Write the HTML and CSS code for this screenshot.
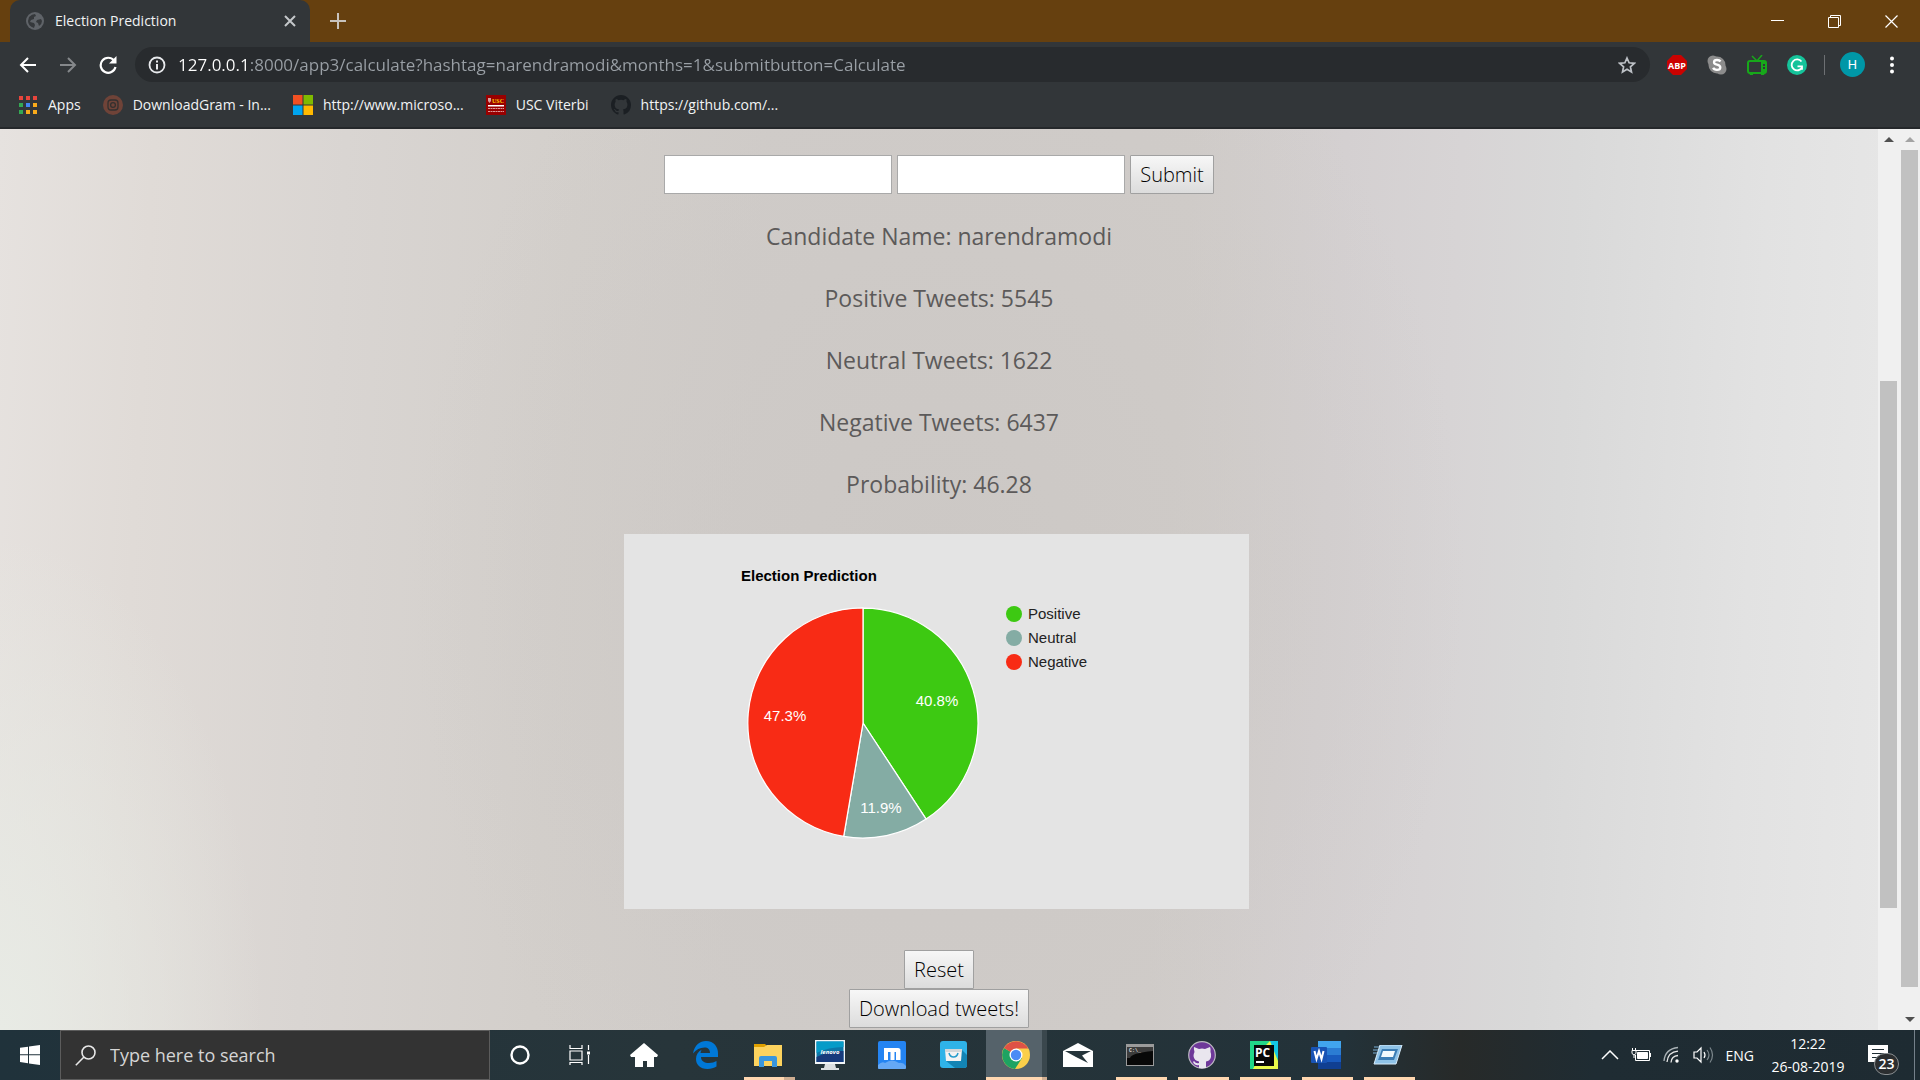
FILE: index.html
```html
<!DOCTYPE html>
<html lang="en">
<head>
<meta charset="utf-8">
<title>Election Prediction</title>
<link rel="stylesheet" href="styles.css">
</head>
<body>
<header class="browser">
  <div class="titlebar">
    <div class="tab">
      <svg class="tab-icon" width="18" height="18" viewBox="0 0 18 18"><circle cx="9" cy="9" r="9" fill="#5f6368"/><path d="M3 5q3-3 6-3l1 2-2 1v2l-3 1-1 2 4 1 1 2-1 3Q2 14 2 9zM11 8l4-1 1 2q0 3-3 5l-1-3-2-1z" fill="#35383b"/></svg>
      <span class="tab-title">Election Prediction</span>
      <button class="plain" aria-label="Close tab"><svg width="12" height="12" viewBox="0 0 12 12" stroke="#c4c7ca" stroke-width="2"><path d="M1 1l10 10M11 1L1 11"/></svg></button>
    </div>
    <button class="plain new-tab" aria-label="New tab"><svg width="16" height="16" viewBox="0 0 16 16" stroke="#c8c3bd" stroke-width="2"><path d="M8 0v16M0 8h16"/></svg></button>
    <div class="window-buttons">
      <button class="plain" aria-label="Minimize"><svg width="13" height="13" viewBox="0 0 13 13" stroke="#fff"><path d="M0 5.500h13"/></svg></button>
      <button class="plain" aria-label="Restore"><svg width="13" height="13" viewBox="0 0 13 13" fill="none" stroke="#fff"><path d="M.5 2.500h10v10H.5zM2.500 2V.5h10v10H11"/></svg></button>
      <button class="plain" aria-label="Close"><svg width="13" height="13" viewBox="0 0 13 13" stroke="#fff" stroke-width="1.200"><path d="M.5.5l12 12M12.500.5l-12 12"/></svg></button>
    </div>
  </div>
  <div class="toolbar">
    <div class="nav">
      <button class="plain" aria-label="Back"><svg width="18" height="18" viewBox="0 0 18 18" fill="none" stroke="#fff" stroke-width="2"><path d="M17 9H2M9 2L2 9l7 7"/></svg></button>
      <button class="plain" aria-label="Forward"><svg width="18" height="18" viewBox="0 0 18 18" fill="none" stroke="#85888b" stroke-width="2"><path d="M1 9h15M9 2l7 7-7 7"/></svg></button>
      <button class="plain" aria-label="Reload"><svg width="18" height="18" viewBox="0 0 18 18"><path d="M15 4.500A7.500 7.500 0 1 0 16.500 11" fill="none" stroke="#fff" stroke-width="2.200"/><path d="M17.500 0v7.500H10z" fill="#fff"/></svg></button>
    </div>
    <div class="omnibox">
      <svg width="18" height="18" viewBox="0 0 18 18"><circle cx="9" cy="9" r="7.500" fill="none" stroke="#e8eaed" stroke-width="1.800"/><path d="M8 4.500h2v2H8zM8 8h2v5.500H8z" fill="#e8eaed"/></svg>
      <input class="url" type="text" aria-label="Address" value="127.0.0.1:8000/app3/calculate?hashtag=narendramodi&amp;months=1&amp;submitbutton=Calculate">
      <button class="plain" aria-label="Bookmark this page"><svg width="18" height="18" viewBox="0 0 18 18" fill="none" stroke="#bdc1c6" stroke-width="1.700"><path d="M9 2l2.100 4.800 5.200.5-3.900 3.500 1.100 5.200L9 13.300 4.500 16l1.100-5.200L1.700 7.300l5.200-.5z"/></svg></button>
    </div>
    <div class="extensions">
      <button class="plain" aria-label="ABP"><svg width="20" height="20" viewBox="0 0 20 20"><path d="M6 0h8l6 6v8l-6 6H6l-6-6V6z" fill="#cb0200"/><text class="abp" x="10" y="14" text-anchor="middle">ABP</text></svg></button>
      <button class="plain" aria-label="Skype"><svg width="20" height="20" viewBox="0 0 20 20"><circle cx="6" cy="6" r="5.500" fill="#8c8c8c"/><circle cx="14" cy="14" r="5.500" fill="#8c8c8c"/><circle cx="10" cy="10" r="8.500" fill="#8c8c8c"/><path d="M13.500 6.500Q12.500 5 10 5 7 5 7 7.300 7 9 10 9.700q3.300.7 3.300 2.700 0 2.400-3.300 2.400-3 0-3.800-2" fill="none" stroke="#fff" stroke-width="2.300"/></svg></button>
      <button class="plain" aria-label="TV"><svg width="20" height="20" viewBox="0 0 20 20"><path d="M5 1l5 5 5-6" fill="none" stroke="#17a81a" stroke-width="1.500"/><rect x="1" y="6" width="18" height="12" rx="2" fill="none" stroke="#17a81a" stroke-width="2"/><path d="M14 6h5v12h-5zM2 18h4v2H3zM14 18h4l-1 2h-3z" fill="#17a81a"/><path d="M16 9h2v2h-2zM16 12h2v2h-2z" fill="#323639"/></svg></button>
      <button class="plain" aria-label="Grammarly"><svg width="20" height="20" viewBox="0 0 20 20"><circle cx="10" cy="10" r="10" fill="#15c39a"/><path d="M14.500 6.500A5.500 5.500 0 1 0 15 12.500M10.500 11.300h4.500v3.500" fill="none" stroke="#fff" stroke-width="1.800"/></svg></button>
    </div>
    <span class="divider"></span>
    <button class="profile" aria-label="Profile H">H</button>
    <button class="plain menu" aria-label="Menu"><svg width="4" height="18" viewBox="0 0 4 18" fill="#fff"><circle cx="2" cy="2.500" r="2"/><circle cx="2" cy="9" r="2"/><circle cx="2" cy="15.500" r="2"/></svg></button>
  </div>
  <nav class="bookmarks">
    <a href="#"><svg width="20" height="20" viewBox="0 0 20 20"><path d="M1 1h4v4H1zM8 1h4v4H8zM15 1h4v4h-4z" fill="#e8453c"/><path d="M1 8h4v4H1zM1 15h4v4H1z" fill="#34a853"/><path d="M8 8h4v4H8z" fill="#4285f4"/><path d="M15 8h4v4h-4zM8 15h4v4H8zM15 15h4v4h-4z" fill="#f9ab1b"/></svg>Apps</a>
    <a href="#"><svg width="20" height="20" viewBox="0 0 20 20"><circle cx="10" cy="10" r="10" fill="#6f4338"/><g fill="none" stroke="#33302f" stroke-width="1.300"><rect x="5" y="5" width="10" height="10" rx="3"/><circle cx="10" cy="10" r="2.400"/></g></svg>DownloadGram - In...</a>
    <a href="#"><svg width="20" height="20" viewBox="0 0 20 20"><path d="M0 0h9.500v9.500H0z" fill="#f25022"/><path d="M10.500 0H20v9.500h-9.500z" fill="#7fba00"/><path d="M0 10.500h9.500V20H0z" fill="#00a4ef"/><path d="M10.500 10.500H20V20h-9.500z" fill="#ffb900"/></svg>http://www.microso...</a>
    <a href="#"><svg width="20" height="20" viewBox="0 0 20 20"><path d="M0 0h20v20H0z" fill="#900"/><path d="M2 3h3v3l-1.500 2L2 6z" fill="#d9a0a0"/><text class="usc" x="6" y="8">USC</text><path d="M2 10h16v1.500H2z" fill="#fff"/><path d="M2 13.500h16M2 16.500h16" stroke="#d99" stroke-width="1.200" stroke-dasharray="2 .5"/></svg>USC Viterbi</a>
    <a href="#"><svg width="20" height="20" viewBox="0 0 16 16"><path fill="#1b1f23" d="M8 0C3.580 0 0 3.580 0 8c0 3.540 2.290 6.530 5.470 7.590.4.070.55-.17.55-.38v-1.490c-2.010.37-2.530-.49-2.690-.94-.09-.23-.48-.94-.82-1.130-.28-.15-.68-.52-.01-.53.63-.01 1.080.58 1.230.82.72 1.210 1.870.87 2.330.66.07-.52.28-.87.51-1.070-1.780-.2-3.640-.89-3.640-3.950 0-.87.31-1.590.82-2.150-.08-.2-.36-1.020.08-2.120 0 0 .67-.21 2.200.82a7.600 7.600 0 0 1 4 0c1.530-1.040 2.200-.82 2.200-.82.44 1.100.16 1.920.08 2.120.51.56.82 1.270.82 2.150 0 3.070-1.870 3.750-3.650 3.950.29.25.54.73.54 1.480v2.200c0 .21.15.46.55.38A8 8 0 0 0 16 8c0-4.420-3.580-8-8-8z"/></svg>https://github.com/...</a>
  </nav>
</header>

<div class="viewport">
  <main class="page">
    <form class="search-form">
      <input class="field" type="text" aria-label="Hashtag">
      <input class="field" type="text" aria-label="Months">
      <button class="btn" type="button">Submit</button>
    </form>
    <div class="results">
      <p>Candidate Name: narendramodi</p>
      <p>Positive Tweets: 5545</p>
      <p>Neutral Tweets: 1622</p>
      <p>Negative Tweets: 6437</p>
      <p>Probability: 46.28</p>
    </div>
    <svg class="chart" width="625" height="375" viewBox="0 0 625 375" role="img" aria-label="Election Prediction pie chart">
      <rect width="625" height="375" fill="#e4e4e4"/>
      <text class="chart-title" x="117" y="47">Election Prediction</text>
      <g stroke="#fff" stroke-width="1.250">
        <path d="M239 189V74A115 115 0 0 1 302.100 285.100z" fill="#3dc912"/>
        <path d="M239 189L302.100 285.100A115 115 0 0 1 219.700 302.400z" fill="#84aca4"/>
        <path d="M239 189L219.700 302.400A115 115 0 0 1 239 74z" fill="#f82b15"/>
      </g>
      <g class="slice-label" text-anchor="middle">
        <text x="313" y="172">40.8%</text>
        <text x="161" y="187">47.3%</text>
        <text x="257" y="279">11.9%</text>
      </g>
      <circle cx="390" cy="80" r="8" fill="#3dc912"/>
      <circle cx="390" cy="104" r="8" fill="#84aca4"/>
      <circle cx="390" cy="128" r="8" fill="#f82b15"/>
      <g class="legend">
        <text x="404" y="85">Positive</text>
        <text x="404" y="109">Neutral</text>
        <text x="404" y="133">Negative</text>
      </g>
    </svg>
    <div class="actions">
      <button class="btn" type="button">Reset</button>
      <button class="btn" type="button">Download tweets!</button>
    </div>
  </main>
  <div class="scrollbar inner">
    <span class="arrow up"></span>
    <span class="before"></span><span class="thumb"></span><span class="after"></span>
  </div>
  <div class="scrollbar outer">
    <span class="arrow up faded"></span>
    <span class="thumb"></span><span class="after"></span>
    <span class="arrow down"></span>
  </div>
</div>

<footer class="taskbar">
  <button class="plain start" aria-label="Start"><svg width="20" height="20" viewBox="0 0 20 20" fill="#fff"><path d="M0 2.800L8 1.700v7.600H0zM9 1.500L20 0v9.300H9zM0 10.300h8v7.900l-8-1.100zM9 10.300h11V20L9 18.400z"/></svg></button>
  <label class="search">
    <svg width="21" height="21" viewBox="0 0 21 21" fill="none" stroke="#e8e8e8" stroke-width="1.600"><circle cx="13.500" cy="7.500" r="6.500"/><path d="M9 12L.8 20.200"/></svg>
    <input type="text" placeholder="Type here to search" aria-label="Type here to search">
  </label>
  <div class="apps">
    <button class="app" aria-label="Cortana"><svg width="20" height="20" viewBox="0 0 20 20"><circle cx="10" cy="10" r="8.500" fill="none" stroke="#fff" stroke-width="2.400"/></svg></button>
    <button class="app" aria-label="Task view"><svg width="26" height="20" viewBox="0 0 26 20" fill="none" stroke="#fff" stroke-width="1.200"><path d="M1 0v3.500h12V0M1 6h12v9H1zM1 20v-2.500h12V20M19.500 0v5M19.500 10v9"/><path d="M18 6.500h3v3h-3z" fill="#fff" stroke="none"/></svg></button>
    <button class="app" aria-label="Home"><svg width="28" height="24" viewBox="0 0 28 24"><path d="M14 0l14 12-1 2h-3v10h-7v-6h-4v6H5V14H1l-1-2z" fill="#fff"/></svg></button>
    <button class="app" aria-label="Edge"><svg width="26" height="28" viewBox="0 0 26 28"><path d="M0 12.500C1.500 4 7 0 13 0c8 0 12 6 12 12.500V16H8c0 4 3.500 6 8 6 3 0 5.500-.8 7.500-2v5.500C21 27 18 28 14.500 28 7 28 3 23.500 3 18c0-4 2-7.500 6-9.500C8 9.500 7.600 11 7.500 12H17c0-3.500-2-5.500-5.500-5.500C7 6.500 3 8.500 0 12.500z" fill="#0078d7"/></svg></button>
    <button class="app running stacked" aria-label="File Explorer"><svg width="28" height="24" viewBox="0 0 28 24"><path d="M0 1h11l2 2v5H0z" fill="#dfa000"/><path d="M0 4h10l3-2h15v21H0z" fill="#fdd35e"/><path d="M5 24V15q0-2 2-2h14q2 0 2 2v9h-5v-6h-8v6z" fill="#3a96dd"/></svg></button>
    <button class="app" aria-label="Lenovo"><svg width="30" height="30" viewBox="0 0 30 30"><path d="M0 0h30v24H0z" fill="#f2f5f7"/><path d="M1.500 1.500h27V22h-27z" fill="#0d76a8"/><path d="M1.500 17q13-7 27-6v11h-27z" fill="#173a7c"/><path d="M1.500 1.500h27V7q-15 0-27 6z" fill="#069bc8"/><text class="lenovo" x="15" y="14" text-anchor="middle">lenovo</text><path d="M10 24h10l1 4h3v2H6v-2h3z" fill="#dcdfe2"/></svg></button>
    <button class="app" aria-label="Maxthon"><svg width="28" height="28" viewBox="0 0 28 28"><rect width="28" height="28" rx="2" fill="#2484f2"/><path d="M0 24q4-4 7-2 7-5 14 0 4-1 7 3v2q0 1-1 1H1q-1 0-1-1z" fill="#65a8f5"/><path d="M6 19V7h14q2.500 0 2.500 2.500V19H18v-8h-1.500v8h-4v-8H10v8z" fill="#fff"/></svg></button>
    <button class="app" aria-label="Store"><svg width="28" height="28" viewBox="0 0 28 28"><rect width="27" height="27" rx="3" fill="#2fb3e8"/><path d="M22 9l5 5v10q0 3-3 3h-9l-9-7z" fill="#1384b4"/><path d="M5 8h17l-1 12H6z" fill="#f3f3f3"/><path d="M5 8h17v3H5z" fill="#d4d7d9"/><path d="M9 12q1 4 4.500 4t4.500-4" fill="none" stroke="#269ccc" stroke-width="1.500"/></svg></button>
    <button class="app running active" aria-label="Chrome"><svg width="28" height="28" viewBox="0 0 28 28"><circle cx="14" cy="14" r="14" fill="#fbcf4a"/><path d="M14 14L2 7A14 14 0 0 0 13 28l7-11z" fill="#1ea362"/><path d="M14 14L2 7a14 14 0 0 1 24.200 0.500H14z" fill="#de5246"/><circle cx="14" cy="14" r="6.500" fill="#fff"/><circle cx="14" cy="14" r="5.200" fill="#4c8bf5"/></svg></button>
    <button class="app" aria-label="Mail"><svg width="30" height="24" viewBox="0 0 30 24"><path d="M0 8L15 0l15 8v16H0z" fill="#fff"/><path d="M2 8h26l-9 4.500 6 7.500-12-6z" fill="#25343a"/></svg></button>
    <button class="app running" aria-label="Command Prompt"><svg width="28" height="22" viewBox="0 0 28 22"><path d="M0 0h28v22H0z" fill="#9b9b9b"/><path d="M1 3h26v18H1z" fill="#080808"/><path d="M1 3h26v4Q5 9 4 14H1z" fill="#3c3c3c"/><text class="prompt" x="3" y="8">C:\_</text></svg></button>
    <button class="app running" aria-label="GitHub Desktop"><svg width="28" height="28" viewBox="0 0 28 28"><circle cx="14" cy="14" r="13.300" fill="#6e3899" stroke="#bcb9c2" stroke-width="1.200"/><path d="M6 6l5 2q3-.8 6 0l5-2q1 2 .5 5 1 2 .5 5-1 4-5 4.500v6.500h-7v-3q-4 1-6-3l1-1q2 3 5 2v-1.500q-5-1-5.500-5.500 0-2 1-4-1-3-.5-5z" fill="#e9e6ee"/></svg></button>
    <button class="app running" aria-label="PyCharm"><svg width="28" height="28" viewBox="0 0 28 28"><path d="M0 0h28v28H0z" fill="#21d789"/><path d="M20 0h8v18l-8-8z" fill="#13c8e5"/><path d="M15 5l5-5 8 20v8H3z" fill="#e8f84a"/><path d="M4 4h20v21H4z" fill="#080808"/><path d="M6 20h8v2H6z" fill="#fff"/><text class="pc" x="5" y="16">PC</text></svg></button>
    <button class="app running" aria-label="Word"><svg width="30" height="28" viewBox="0 0 30 28"><path d="M7 0h23v7H7z" fill="#41a5ee"/><path d="M7 7h23v7H7z" fill="#2b7cd3"/><path d="M7 14h23v7H7z" fill="#185abd"/><path d="M7 21h23v7H7z" fill="#103f91"/><rect y="6" width="16" height="16" rx="1" fill="#1853b4"/><path d="M3.500 10l2 8 2.500-8 2.500 8 2-8" fill="none" stroke="#fff" stroke-width="2"/></svg></button>
    <button class="app running" aria-label="Run"><svg width="30" height="20" viewBox="0 0 30 20"><path d="M7 0h22l-6 19H1z" fill="#8fc3e8" stroke="#d8ecfa"/><path d="M9 4h16l-4 11H5z" fill="#3d7eb5"/><path d="M10 6h12l-2 6H8z" fill="#f3fafd"/><path d="M1 2h5M0 5h5M0 8h4" stroke="#79aed6"/></svg></button>
  </div>
  <div class="tray">
    <button class="plain" aria-label="Show hidden icons"><svg width="18" height="10" viewBox="0 0 18 10" fill="none" stroke="#fff" stroke-width="1.500"><path d="M1 9l8-8 8 8"/></svg></button>
    <svg width="20" height="16" viewBox="0 0 20 16" fill="none" stroke="#fff"><path d="M5 3.500h13.500v10h-14V8M19.500 6v4M1 3.500h4v3L3 8 1 6.500zM1.500 1v2M4.500 1v2M3 8v3"/><path d="M6.500 5.500h10v6h-10z" fill="#fff"/></svg>
    <svg width="18" height="18" viewBox="0 0 18 18" fill="none" stroke="#e8e8e8" stroke-width="1.300"><path d="M1 15Q2 3 15 1.500" stroke="#aab2b6"/><path d="M4 16Q5 6 15 5.200"/><path d="M8 16.500Q8.500 10 15 9.500"/><circle cx="14" cy="15" r="1.700" fill="#fff" stroke="none"/></svg>
    <svg width="21" height="18" viewBox="0 0 21 18" fill="none" stroke="#fff" stroke-width="1.200"><path d="M1 6h3l4-4v14l-4-4H1z"/><path d="M11 6q2 3 0 6"/><path d="M14 4q4 5 0 10M17 1.500q5 7.500 0 15" stroke="#7c878c"/></svg>
    <span class="lang">ENG</span>
    <div class="clock"><span>12:22</span><span>26-08-2019</span></div>
    <button class="plain notify" aria-label="23 notifications"><svg width="20" height="20" viewBox="0 0 20 20"><path d="M0 0h20v17H8l-4 0H0z" fill="#fff"/><path d="M4 4.500h12M4 8.500h12M4 12.500h8" stroke="#1f2d33" stroke-width="1.200"/></svg><span class="badge">23</span></button>
  </div>
</footer>
</body>
</html>
```
FILE: styles.css
```css
* {
  box-sizing: border-box;
}

body {
  margin: 0;
  height: 100vh;
  display: flex;
  flex-direction: column;
  overflow: hidden;
  font-family: "Open Sans", "Noto Sans", sans-serif;
}

svg {
  display: block;
  flex: none;
}

.plain {
  border: 0;
  padding: 0;
  background: none;
  display: flex;
}

/* Browser frame */
.browser {
  flex: none;
  background: #323639;
  border-bottom: 2px solid #25282b;
  color: #f1f3f4;
}

.titlebar {
  height: 42px;
  background: #66400f;
  display: flex;
  align-items: center;
  padding-left: 10px;
}

.tab {
  width: 300px;
  height: 42px;
  padding: 0 14px 0 16px;
  border-radius: 10px 10px 0 0;
  background: #323639;
  display: flex;
  align-items: center;
}

.tab-title {
  flex: 1;
  margin-left: 11px;
  font-size: 14px;
  line-height: 20px;
}

.new-tab {
  margin-left: 20px;
}

.window-buttons {
  margin-left: auto;
  padding-right: 22px;
  display: flex;
  gap: 44px;
}

.toolbar {
  height: 45px;
  padding: 0 26px 0 19px;
  display: flex;
  align-items: center;
}

.nav {
  width: 116px;
  display: flex;
  gap: 22px;
}

.omnibox {
  flex: 1;
  height: 35px;
  padding: 0 14px 0 13px;
  border-radius: 18px;
  background: #282b2e;
  display: flex;
  align-items: center;
}

.url {
  flex: 1;
  min-width: 0;
  margin: 0 12px;
  padding: 0;
  border: 0;
  outline: 0;
  font: 17px/24px "Open Sans", "Noto Sans", sans-serif;
  color: transparent;
  background: linear-gradient(90deg, #fff 70px, #9aa0a6 70px);
  background-clip: text;
}

.extensions {
  margin-left: 17px;
  display: flex;
  gap: 20px;
}

.divider {
  width: 1px;
  height: 20px;
  margin: 0 15px 0 17px;
  background: #6d7073;
}

.profile {
  width: 25px;
  height: 25px;
  padding: 0;
  border: 0;
  border-radius: 50%;
  background: #0097a7;
  color: #fff;
  font: 13px/25px Roboto, sans-serif;
}

.menu {
  margin-left: 25px;
}

.bookmarks {
  height: 40px;
  padding: 0 18px 4px;
  display: flex;
  align-items: center;
  gap: 22px;
}

.bookmarks a {
  display: flex;
  align-items: center;
  gap: 10px;
  color: inherit;
  text-decoration: none;
  font-size: 14px;
  line-height: 20px;
}

.abp {
  font: bold 9px "Open Sans", sans-serif;
  fill: #fff;
}

.usc {
  font: bold 6px "Liberation Serif", serif;
  fill: #fc0;
}

/* Page */
.viewport {
  flex: 1;
  min-height: 0;
  display: flex;
}

.page {
  flex: 1;
  padding-top: 26px;
  display: flex;
  flex-direction: column;
  align-items: center;
  background:
    radial-gradient(ellipse 14% 55% at 0 100%, #e8ebe5, #e8ebe500),
    radial-gradient(ellipse 28% 75% at 50% 50%, #ccc8c5, #ccc8c500),
    linear-gradient(93deg, #e6e2df 0, #e0dbd7 8%, #d9d5d2 18%, #d3cfcb 30%, #d0ccc9 40%, #d0ccc9 62%, #d4d0d1 70%, #d7d4d5 76%, #d9d9d9 82%, #e2e2e2 92%, #e7e7e7 100%);
}

.search-form {
  display: flex;
  gap: 5px;
}

.field {
  width: 228px;
  height: 39px;
  padding: 0 8px;
  border: 1px solid #a9a9a9;
  background: #fff;
  font: 300 20px "Open Sans", sans-serif;
}

.btn {
  height: 39px;
  padding: 0 9px;
  border: 1px solid #a0a0a0;
  border-radius: 1px;
  background: linear-gradient(#f7f7f7, #dcdcdc);
  color: #000;
  font: 300 20px/36px "Open Sans", sans-serif;
}

.results {
  margin: 24px 0 32px;
  display: flex;
  flex-direction: column;
  gap: 26px;
  text-align: center;
}

.results p {
  margin: 0;
  color: #5c5a5a;
  font-size: 23px;
  line-height: 36px;
}

.chart {
  margin-right: 5px;
  font-family: "Liberation Sans", Arial, sans-serif;
  font-size: 15px;
}

.chart-title {
  font-weight: bold;
}

.slice-label {
  fill: #fff;
}

.legend {
  fill: #222;
}

.actions {
  margin-top: 41px;
  display: flex;
  flex-direction: column;
  align-items: center;
}

.scrollbar {
  width: 21px;
  padding: 0 2px;
  background: #f0f0f0;
  display: flex;
  flex-direction: column;
}

.arrow {
  height: 21px;
  display: flex;
  align-items: center;
  justify-content: center;
}

.arrow::before {
  content: "";
  border: 5px solid transparent;
}

.up::before {
  border-top: 0;
  border-bottom-color: #505050;
}

.down::before {
  border-bottom: 0;
  border-top-color: #505050;
}

.faded::before {
  border-bottom-color: #a3a3a3;
}

.thumb {
  background: #c1c1c1;
}

.inner .before { flex: 231; }
.inner .thumb { flex: 527; }
.inner .after { flex: 122; }
.outer .thumb { flex: 837; }
.outer .after { flex: 22; }

/* Taskbar */
.taskbar {
  flex: none;
  height: 50px;
  display: flex;
  background: linear-gradient(90deg, #20323b, #27353a 35%, #233239 70%, #272a29 76%, #1f2c33 83%, #1e2b32);
  color: #fff;
}

.start {
  width: 60px;
  align-items: center;
  justify-content: center;
}

.search {
  width: 430px;
  padding-left: 14px;
  border: 1px solid #5c5c5c;
  background: #333;
  display: flex;
  align-items: center;
  gap: 14px;
}

.search input {
  flex: 1;
  min-width: 0;
  padding: 0;
  border: 0;
  background: none;
  color: #fff;
  font: 18px/24px "Open Sans", sans-serif;
}

.search input::placeholder {
  color: #d5d5d5;
}

.apps {
  display: flex;
}

.app {
  width: 62px;
  padding: 3px 2px 0 0;
  border: 0;
  border-bottom: 3px solid transparent;
  background: none;
  display: flex;
  align-items: center;
  justify-content: center;
}

.running {
  background: linear-gradient(#ffd7b0, #ffd7b0) center 100% / 51px 3px no-repeat border-box;
}

.stacked {
  background: linear-gradient(90deg, #ffd7b0 40px, #cfae92 40px) center 100% / 51px 3px no-repeat border-box;
}

.active {
  background:
    linear-gradient(90deg, #ffd7b0 56px, #cfae92 56px) 0 100% / 61px 3px no-repeat border-box,
    linear-gradient(90deg, #55626a 56px, #3a474d 56px) 0 0 / 61px 50px no-repeat border-box;
}

.lenovo {
  font: italic bold 6px "Open Sans", sans-serif;
  fill: #fff;
}

.prompt {
  font: bold 5px "Liberation Mono", monospace;
  fill: #ddd;
}

.pc {
  font: bold 12px "Open Sans", sans-serif;
  fill: #fff;
}

.tray {
  margin-left: auto;
  margin-right: 5px;
  padding-right: 26px;
  border-right: 1px solid #75808a;
  display: flex;
  align-items: center;
  gap: 12px;
  font-size: 14px;
  line-height: 23px;
}

.clock {
  width: 84px;
  display: flex;
  flex-direction: column;
  text-align: center;
}

.notify {
  position: relative;
  margin-left: 6px;
}

.badge {
  position: absolute;
  left: 6px;
  top: 8px;
  width: 25px;
  height: 22px;
  border: 1px solid #8a8f92;
  border-radius: 11px;
  background: #2b2e30;
  color: #fff;
  font: 600 14px/20px "Open Sans", sans-serif;
  text-align: center;
}
```
